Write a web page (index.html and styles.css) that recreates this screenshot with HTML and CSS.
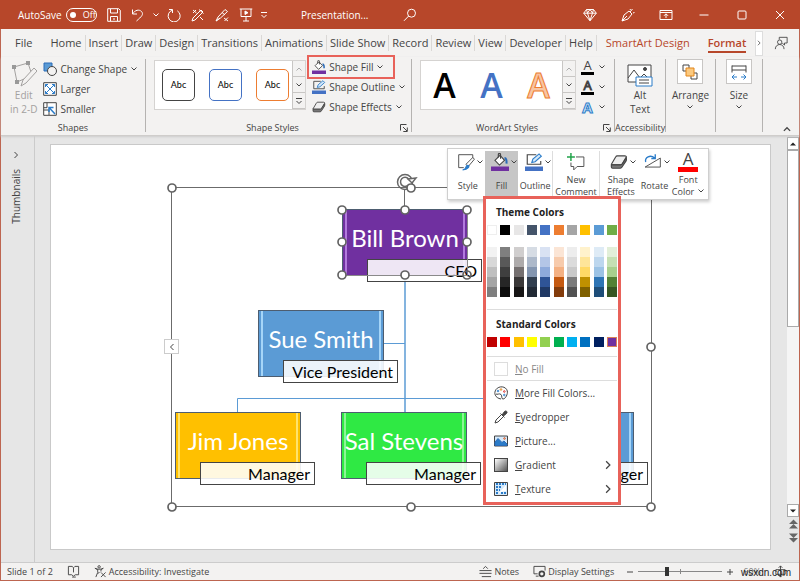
FILE: index.html
```html
<!DOCTYPE html>
<html lang="en">
<head>
<meta charset="utf-8">
<title>Presentation</title>
<link rel="stylesheet" href="styles.css">
</head>
<body>
<svg class="defs" aria-hidden="true">
  <symbol id="chev" viewBox="0 0 8 8"><path d="M1.5 2.5 4 5l2.500-2.500"/></symbol>
  <symbol id="chev-up" viewBox="0 0 8 8"><path d="M1.500 5.500 4 3l2.500 2.500"/></symbol>
  <symbol id="chev-right" viewBox="0 0 8 8"><path d="M2.500 1 5.500 4l-3 3"/></symbol>
  <symbol id="chev-left" viewBox="0 0 8 8"><path d="M5.500 1 2.500 4l3 3"/></symbol>
  <symbol id="chev-bar" viewBox="0 0 8 8"><path d="M1 1.500h6M1.500 4 4 6.500 6.500 4"/></symbol>
  <symbol id="launch" viewBox="0 0 8 8"><path d="M.5 6.500v-6h6M3 3l4 4M7.300 3.500v4h-4"/></symbol>
  <symbol id="bucket" viewBox="0 0 16 16">
    <path d="M3.500 6.500 8 2l4 4.500-4.500 4.200z" fill="#fff"/><path d="M6.500 4V1.500c0-1.500 2-1.500 2 0V5"/>
    <path d="M12 4.500c1.500 0 2 2 1.800 5" stroke="#2b6cb8" stroke-width="1.800"/>
    <path d="M0 12h16v4H0z" fill="#7030a0" stroke="none"/>
  </symbol>
  <symbol id="outline" viewBox="0 0 16 16">
    <path d="M10 1.500H2V10h12V7"/><path d="m6 8.500 1-3L12.500.8l2 2L9 7.800z" fill="#d5e9fa" stroke="#2b7cc9"/>
    <path d="M0 12h16v4H0z" fill="#4472c4" stroke="none"/>
  </symbol>
  <symbol id="effects" viewBox="0 0 16 16">
    <path d="M1.500 9.500 5 3.500q.5-1 1.500-1H13q2 0 1.200 1.500L11 9.500q-.5 1-1.500 1H2q-1 0-.5-1z" fill="#eee"/>
    <path d="M1.200 10v2.500q0 1 1 1h7q1 0 1.500-1l3.600-5.500q.5-1 .2-3L11 9.500q-.5 1-1.500 1H2q-.8 0-.8-.5z" fill="#777"/>
  </symbol>
  <symbol id="dropper" viewBox="0 0 14 14">
    <path d="m1 13 1-3 5.500-5.500 2 2L4 12zM6.500 3.500l4 4" /><path d="m8 5 2.500-3.500c1.500-1.500 3.500.5 2 2L9.500 6z" fill="currentColor"/>
  </symbol>
</svg>

<div class="window">
  <header class="titlebar">
    <label class="autosave">AutoSave <input type="checkbox" class="switch-input"><span class="switch"><i></i>Off</span></label>
    <nav class="quick" aria-label="Quick access">
      <button aria-label="Save"><svg viewBox="0 0 14 14"><path d="M.7.7h11l1.600 1.600v11H.7zM3.500 1v4h7V1M3.500 13V8.500h7V13M6 11h2"/></svg></button>
      <button aria-label="Undo"><svg viewBox="0 0 14 14"><path d="M1.500 1.500v4.500H6M1.500 6C4 2 8 1 10.500 3.500c2.500 3 0 5-5 9.500"/></svg></button>
      <button aria-label="Undo history" class="tiny"><svg><use href="#chev"/></svg></button>
      <button aria-label="Redo"><svg viewBox="0 0 14 14"><path d="M2 1.500h3.500V5M5.300 2.200a6 6 0 1 0 5 .6"/></svg></button>
      <button aria-label="Pick colour"><svg viewBox="0 0 14 14"><path d="m1 13 1-3 8-8 2 2-8 8zM8 1.500l4.500 4M2 2l3.500 3M2 5l3-3M9 9l3 3"/></svg></button>
      <button aria-label="Apply colour"><svg viewBox="0 0 14 14"><path d="m1 13 2-4 7-7.500 2.500 2L5.500 10zM1 13l4-3M7 4.500 10 7M9 10l4 3M13 9.500 9.500 13"/></svg></button>
      <button aria-label="Start slide show"><svg viewBox="0 0 14 14"><path d="M.7 1h12.600M2 1v7.500h10V1M7 8.500V13M4 13h6"/><path d="m6 3 3 1.700L6 6.500z" fill="currentColor"/></svg></button>
      <button aria-label="Customize toolbar" class="tiny"><svg><use href="#chev-bar"/></svg></button>
    </nav>
    <span class="doc">Presentation...</span>
    <button class="search" aria-label="Search"><svg viewBox="0 0 14 14"><circle cx="8.500" cy="5.200" r="4"/><path d="M5.700 8 1 12.800"/></svg></button>
    <nav class="winbtns" aria-label="Window">
      <button aria-label="Premium"><svg viewBox="0 0 14 14"><path d="M3.500 1.500h7l2.800 3.700L7 12.800.7 5.200zM.7 5.200h12.600M3.500 1.500l1 3.700L7 12.500l2.500-7.300 1-3.700M4.500 5 7 1.500 9.500 5"/></svg></button>
      <button aria-label="Draw"><svg viewBox="0 0 14 14"><path d="m1 13 2-6 5-4 3 3-4 5zM1 13l5-5M9 4l2.500-3M12 5l1.500-.5M9 1l.5 1"/></svg></button>
      <button aria-label="Ribbon display"><svg viewBox="0 0 14 14"><path d="M1 2.500h12v9H1zM1 4.500h12M7 10V6M5 7.800l2-2 2 2"/></svg></button>
      <button aria-label="Minimize"><svg viewBox="0 0 14 14"><path d="M2.500 7h9"/></svg></button>
      <button aria-label="Maximize"><svg viewBox="0 0 14 14"><rect x="3" y="3" width="8" height="8" rx="1"/></svg></button>
      <button aria-label="Close"><svg viewBox="0 0 14 14"><path d="m3 3 8 8M11 3l-8 8"/></svg></button>
    </nav>
  </header>

  <nav class="tabs" aria-label="Ribbon tabs">
    <a href="#" class="file">File</a><a href="#">Home</a><a href="#">Insert</a><a href="#">Draw</a><a href="#">Design</a><a href="#">Transitions</a><a href="#">Animations</a><a href="#">Slide Show</a><a href="#">Record</a><a href="#">Review</a><a href="#">View</a><a href="#">Developer</a><a href="#">Help</a><a href="#" class="ctx">SmartArt Design</a><a href="#" class="ctx active"><span>Format</span></a>
    <button class="more" aria-label="More tabs"><svg><use href="#chev-right"/></svg></button>
    <button class="share" aria-label="Comments"><svg viewBox="0 0 16 16"><path d="M6 4V1.500h9V8h-3v2.500L9.500 8"/><circle cx="6.500" cy="7" r="2.500"/><path d="M1.500 15c0-7 10-7 10 0"/></svg></button>
  </nav>

  <section class="ribbon">
    <div class="group g-shapes">
      <div class="tools">
        <button class="big dim"><svg viewBox="0 0 26 26"><path d="M3 6 17 2l3 9M3 6l3 15 7-3"/><path d="m10 25 2-6L23 7l3 3-11 12z" fill="#f3f2f1"/><path d="M1 4h4v4H1zM15 0h4v4h-4zM4 19h4v4H4z" fill="#999" stroke="none"/></svg>Edit<br>in 2-D</button>
        <div class="list">
          <button><svg viewBox="0 0 14 14"><path d="M1 1h8v8H1z" fill="#5b9bd5" stroke="#2b6cb8"/><circle cx="9" cy="9" r="4.500" fill="#f3f2f1"/></svg>Change Shape<svg class="c"><use href="#chev"/></svg></button>
          <button><svg viewBox="0 0 14 14"><path d="M.7.700h12.600v12.600H.7z" fill="#fff"/><path d="m2.500 2.500 9 9M11.500 2.500l-9 9M2.500 5V2.500H5M9 2.500h2.500V5M2.500 9v2.500H5M9 11.500h2.500V9" stroke="#2b7cc9"/></svg>Larger</button>
          <button><svg viewBox="0 0 14 14"><path d="M.7.700h12.600v12.600H.7z" fill="#fff"/><path d="M.7 8H6v5M4 .7v5H.7"/><path d="M12 12 6.500 6M6 10V5.500h4.500" stroke="#2b7cc9" stroke-width="1.500"/></svg>Smaller</button>
        </div>
      </div>
      <h2>Shapes</h2>
    </div>
    <div class="group g-styles">
      <div class="tools">
        <div class="gallery">
          <button class="abc k">Abc</button><button class="abc b">Abc</button><button class="abc o">Abc</button>
          <div class="spin"><button class="off" aria-label="Up"><svg><use href="#chev-up"/></svg></button><button aria-label="Down"><svg><use href="#chev"/></svg></button><button aria-label="More styles"><svg><use href="#chev-bar"/></svg></button></div>
        </div>
        <div class="list">
          <button class="marked"><svg><use href="#bucket"/></svg>Shape Fill<svg class="c"><use href="#chev"/></svg></button>
          <button><svg><use href="#outline"/></svg>Shape Outline<svg class="c"><use href="#chev"/></svg></button>
          <button><svg><use href="#effects"/></svg>Shape Effects<svg class="c"><use href="#chev"/></svg></button>
        </div>
      </div>
      <h2>Shape Styles</h2><button class="launch" aria-label="Shape styles options"><svg><use href="#launch"/></svg></button>
    </div>
    <div class="group g-word">
      <div class="tools">
        <div class="gallery">
          <button class="wa k">A</button><button class="wa b">A</button><button class="wa o">A</button>
          <div class="spin"><button class="off" aria-label="Up"><svg><use href="#chev-up"/></svg></button><button aria-label="Down"><svg><use href="#chev"/></svg></button><button aria-label="More styles"><svg><use href="#chev-bar"/></svg></button></div>
        </div>
        <div class="list text-tools">
          <button aria-label="Text fill"><span class="ta">A</span><svg class="c"><use href="#chev"/></svg></button>
          <button aria-label="Text outline"><span class="ta hollow">A</span><svg class="c"><use href="#chev"/></svg></button>
          <button aria-label="Text effects"><span class="ta glow">A</span><svg class="c"><use href="#chev"/></svg></button>
        </div>
      </div>
      <h2>WordArt Styles</h2><button class="launch" aria-label="WordArt options"><svg><use href="#launch"/></svg></button>
    </div>
    <div class="group g-acc">
      <div class="tools"><button class="big"><svg viewBox="0 0 26 26"><path d="M1 4h23v17H1z" fill="#fff"/><path d="m1 17 6-8 6 8 4-4 6 6"/><circle cx="18" cy="8" r="1.500" fill="#444"/><path d="M9 16h16v9H9z" fill="#fff" stroke="#2b7cc9"/><path d="M12 19h10M12 22h10"/></svg>Alt<br>Text</button></div>
      <h2>Accessibility</h2>
    </div>
    <div class="group g-arr">
      <div class="tools"><button class="big boxed"><span><svg viewBox="0 0 16 16"><path d="M1 1h6v6H1zM9 9h6v6H9z" fill="#fff"/><path d="M4 4h8v8H4z" fill="#fbc97f" stroke="#e3861b"/></svg></span>Arrange<svg class="c"><use href="#chev"/></svg></button></div>
    </div>
    <div class="group g-size">
      <div class="tools"><button class="big boxed"><span><svg viewBox="0 0 16 16"><path d="M1 1.500v7M15 1.500v7M1 2h14M1 6h14"/><path d="M1 13h5M10 13h5M3.500 10.500 1 13l2.500 2.500M12.500 10.500 15 13l-2.500 2.500" stroke="#2b7cc9"/></svg></span>Size<svg class="c"><use href="#chev"/></svg></button></div>
    </div>
    <button class="collapse" aria-label="Collapse ribbon"><svg><use href="#chev-up"/></svg></button>
  </section>

  <main class="work">
    <aside class="thumbs"><svg><use href="#chev-right"/></svg><span>Thumbnails</span></aside>
    <div class="stage">
      <div class="slide">
        <svg class="wires" viewBox="0 0 720 405">
          <g fill="none" stroke="#5b9bd5"><path d="M187.500 268v-13.500h334V268M334 199.500h21"/><path d="M355 131v137" stroke-width="1.500"/></g>
        </svg>
        <div class="node ceo"><b>Bill Brown</b><span>CEO</span></div>
        <div class="node vp"><b>Sue Smith</b><span>Vice President</span></div>
        <div class="node m1"><b>Jim Jones</b><span>Manager</span></div>
        <div class="node m2"><b>Sal Stevens</b><span>Manager</span></div>
        <div class="node m3"><b></b><span>Manager</span></div>
        <svg class="wires" viewBox="0 0 720 405">
          <g fill="none" stroke="#6b6b6b"><path d="M121.500 43.500h480v319h-480zM354.500 45v21"/><path d="M292.500 131.500h125v-65" stroke="#8a8a8a"/></g>
          <g fill="none" stroke="#666" stroke-width="1.500"><circle cx="355" cy="38" r="7.500"/><path d="M359 40a4.500 4.500 0 1 1-.5-5" /><path d="m358 35 8-1-4 5z" fill="#fff"/></g>
          <g fill="#fff" stroke="#636363" stroke-width="1.700"><circle cx="122" cy="44" r="4"/><circle cx="361" cy="44" r="4"/><circle cx="601" cy="203" r="4"/><circle cx="122" cy="363" r="4"/><circle cx="361" cy="363" r="4"/><circle cx="601" cy="363" r="4"/>
          <circle cx="292" cy="66" r="4"/><circle cx="355" cy="66" r="4"/><circle cx="417" cy="66" r="4"/><circle cx="292" cy="98" r="4"/><circle cx="417" cy="98" r="4"/><circle cx="292" cy="131" r="4"/><circle cx="355" cy="131" r="4"/><circle cx="417" cy="131" r="4" fill="none"/></g>
        </svg>
        <button class="pane" aria-label="Open text pane"><svg><use href="#chev-left"/></svg></button>

        <div class="mini">
          <button><span><svg viewBox="0 0 16 16"><path d="M14 6V1.500H1.500V13H6" stroke-width=".8"/><path d="m8 10 6-6 1.500 1.500L10 12z" fill="#fff" stroke-width=".8"/><path d="M5 15c4 0 2-4 4.500-4S10 15 5 15z" fill="#2b7cc9" stroke="#2b7cc9"/></svg><svg class="c"><use href="#chev"/></svg></span><em>Style</em></button>
          <button class="on"><span><svg><use href="#bucket"/></svg><svg class="c"><use href="#chev"/></svg></span><em>Fill</em></button>
          <button><span><svg><use href="#outline"/></svg><svg class="c"><use href="#chev"/></svg></span><em>Outline</em></button>
          <button class="wide"><span><svg viewBox="0 0 16 16"><path d="M8 3.500h7V12H9l-3 3v-3H3.500V8.500" stroke-width=".8"/><path d="M3.500 0v7M0 3.500h7" stroke="#21a34a" stroke-width="1.300"/></svg></span><em>New<br>Comment</em></button>
          <button><span><svg><use href="#effects"/></svg><svg class="c"><use href="#chev"/></svg></span><em>Shape<br>Effects</em></button>
          <button><span><svg viewBox="0 0 16 16"><path d="M1 12.500h13.500V4.500z" stroke-width=".8"/><path d="M1.500 8c-1-4 4-7 8-3.500M6.500 5H10V1" stroke="#2b7cc9" stroke-width="1.200"/></svg><svg class="c"><use href="#chev"/></svg></span><em>Rotate</em></button>
          <button class="font"><span><i>A</i></span><em>Font<br>Color <svg class="c"><use href="#chev"/></svg></em></button>
        </div>

        <div class="menu">
          <h3>Theme Colors</h3>
          <div class="swatches">
            <i class="white"></i><i style="background:#000"></i><i style="background:#e7e6e6"></i><i style="background:#44546a"></i><i style="background:#4472c4"></i><i style="background:#ed7d31"></i><i style="background:#a5a5a5"></i><i style="background:#ffc000"></i><i style="background:#5b9bd5"></i><i style="background:#70ad47"></i>
          </div>
          <div class="swatches tints">
            <i style="background:#f2f2f2"></i><i style="background:#7f7f7f"></i><i style="background:#d0cece"></i><i style="background:#d6dce4"></i><i style="background:#d9e2f3"></i><i style="background:#fbe5d5"></i><i style="background:#ededed"></i><i style="background:#fff2cc"></i><i style="background:#deebf6"></i><i style="background:#e2efd9"></i>
            <i style="background:#d8d8d8"></i><i style="background:#595959"></i><i style="background:#aeabab"></i><i style="background:#adb9ca"></i><i style="background:#b4c6e7"></i><i style="background:#f7cbac"></i><i style="background:#dbdbdb"></i><i style="background:#fee599"></i><i style="background:#bdd7ee"></i><i style="background:#c5e0b3"></i>
            <i style="background:#bfbfbf"></i><i style="background:#3f3f3f"></i><i style="background:#757070"></i><i style="background:#8496b0"></i><i style="background:#8eaadb"></i><i style="background:#f4b183"></i><i style="background:#c9c9c9"></i><i style="background:#ffd965"></i><i style="background:#9cc3e5"></i><i style="background:#a8d08d"></i>
            <i style="background:#a5a5a5"></i><i style="background:#262626"></i><i style="background:#3a3838"></i><i style="background:#323f4f"></i><i style="background:#2f5496"></i><i style="background:#c55a11"></i><i style="background:#7b7b7b"></i><i style="background:#bf9000"></i><i style="background:#2e75b5"></i><i style="background:#538135"></i>
            <i style="background:#7f7f7f"></i><i style="background:#0c0c0c"></i><i style="background:#171616"></i><i style="background:#222a35"></i><i style="background:#1f3864"></i><i style="background:#833c0b"></i><i style="background:#525252"></i><i style="background:#7f6000"></i><i style="background:#1e4e79"></i><i style="background:#375623"></i>
          </div>
          <h3 class="std">Standard Colors</h3>
          <div class="swatches last">
            <i style="background:#c00000"></i><i style="background:#f00"></i><i style="background:#ffc000"></i><i style="background:#ff0"></i><i style="background:#92d050"></i><i style="background:#00b050"></i><i style="background:#00b0f0"></i><i style="background:#0070c0"></i><i style="background:#002060"></i><i class="picked"></i>
          </div>
          <button class="nofill"><i class="empty"></i><span><u>N</u>o Fill</span></button>
          <button><svg viewBox="0 0 14 14"><path d="M7 13C1 12-.5 7 2 3.500 5-.5 12 0 13.300 5c.7 3-1.800 8-4.300 8-2 0-.5-3-2-4.500S3 9 2 8"/><circle cx="4" cy="5" r=".8" stroke="#2b7cc9"/><circle cx="7" cy="3.500" r=".8" stroke="#e3861b"/><circle cx="10.300" cy="5.500" r=".8" stroke="#d33"/><circle cx="10.300" cy="9" r=".8" stroke="#2b7cc9"/></svg><span><u>M</u>ore Fill Colors...</span></button>
          <button><svg><use href="#dropper"/></svg><span><u>E</u>yedropper</span></button>
          <button><svg viewBox="0 0 14 14"><path d="M.5 2h13v10H.5z" fill="#d5e9fa"/><path d="M1 11.500V8l3-3.500 4 4L10 7l3 3v1.500z" fill="#2b7cc9" stroke="#2b6cb8"/><circle cx="10.500" cy="4.500" r=".8" stroke="#e3561b"/></svg><span><u>P</u>icture...</span></button>
          <button><i class="grad"></i><span><u>G</u>radient</span><svg class="c"><use href="#chev-right"/></svg></button>
          <button><svg viewBox="0 0 14 14"><path d="M.5.5h13v13H.5z" fill="#d5e9fa"/><path d="M2 2h10M2 5h6M2 8h4M2 11h2M7 11h5" stroke="#2b7cc9" stroke-width="2" stroke-dasharray="2 1"/><path d="m4 12 8-9v6l-5 1z" fill="#fff" stroke="none"/></svg><span><u>T</u>exture</span><svg class="c"><use href="#chev-right"/></svg></button>
        </div>
      </div>
    </div>
    <div class="scroll">
      <button aria-label="Scroll up"><svg viewBox="0 0 8 8"><path d="m0 6 4-4 4 4z"/></svg></button>
      <div class="track"><div class="thumb"></div></div>
      <button aria-label="Scroll down"><svg viewBox="0 0 8 8"><path d="m0 2 4 4 4-4z"/></svg></button>
      <button class="page" aria-label="Previous slide"><svg viewBox="0 0 10 12"><path d="m0 6 5-5 5 5zM0 11l5-5 5 5z"/></svg></button>
      <button class="page" aria-label="Next slide"><svg viewBox="0 0 10 12"><path d="m0 1 5 5 5-5zM0 6l5 5 5-5z"/></svg></button>
    </div>
  </main>

  <footer class="status">
    <span>Slide 1 of 2</span>
    <button aria-label="Spelling"><svg viewBox="0 0 14 14"><path d="M7 3 5.500 1.500H1.500v9H5L7 12l2-1.500h3.500v-9h-4zM7 3v5M5.500 13h4"/></svg></button>
    <button class="acc"><svg viewBox="0 0 14 14"><circle cx="5.500" cy="2" r="1.300"/><path d="M1 3.500 4 5v3l-2 5M1 3.500c3 1.500 6 1.500 9 0L7.500 5v2M4 9l2-1M7.500 8l5 5M12.500 8l-5 5"/></svg>Accessibility: Investigate</button>
    <button class="notes"><svg viewBox="0 0 14 14"><path d="M4.500 4 7 1.500 9.500 4M.5 6h13M.5 9h13M3 12.500h10"/></svg>Notes</button>
    <button><svg viewBox="0 0 14 14"><path d="M5 9.500H1v-8h12V6M3 12h3"/><circle cx="9.500" cy="9.500" r="2.700" stroke-width="1.800"/></svg>Display Settings</button>
    <div class="zoom">
      <button aria-label="Zoom out"><svg viewBox="0 0 8 8"><path d="M1 4h6"/></svg></button>
      <input type="range" min="0" max="100" value="34" aria-label="Zoom">
      <button aria-label="Zoom in"><svg viewBox="0 0 8 8"><path d="M1 4h6M4 1v6"/></svg></button>
      <button class="pct">60%</button>
      <button aria-label="Fit slide"><svg viewBox="0 0 14 14"><path d="M2 5h10v5H2zM7 1v12M5 3l2-2 2 2M5 11l2 2 2-2"/></svg></button>
      <span class="mark">wsxdn.com</span>
    </div>
  </footer>
</div>
</body>
</html>
```
FILE: styles.css
```css
* { box-sizing: border-box; }
html, body { height: 100%; margin: 0; }
body { font: 10px/14px "Open Sans", "Noto Sans", sans-serif; color: #444; overflow: hidden; }
button { font: inherit; color: inherit; background: none; border: 0; padding: 0; margin: 0; white-space: nowrap; }
a { color: inherit; text-decoration: none; }
i, em { font-style: normal; }
svg { display: block; flex: none; width: 14px; height: 14px; fill: none; stroke: currentColor; }
svg.defs { position: absolute; width: 0; height: 0; }
svg.c { width: 8px; height: 8px; }
h2, h3 { margin: 0; font-size: inherit; }

.window { height: 100%; display: grid; grid-template-columns: minmax(0, 1fr); grid-template-rows: 29px 28px 79px 1fr 18px; border: solid #bd6550; border-width: 0 1px 1px; background: #f3f2f1; }

.titlebar { display: flex; align-items: center; background: #b7472a; color: #fff; margin: 0 -1px; padding: 0 6px 0 18px; }
.autosave { display: flex; align-items: center; gap: 4px; width: 89px; white-space: nowrap; }
.switch-input { position: absolute; opacity: 0; }
.switch { display: flex; align-items: center; gap: 7px; width: 31px; height: 14px; border: 1px solid #fff; border-radius: 7px; padding-left: 3px; font-size: 9px; }
.switch i { width: 6px; height: 6px; border-radius: 50%; background: #fff; }
.quick { display: flex; align-items: center; gap: 10px; }
.quick .tiny { margin: 0 -3px; }
.quick .tiny svg { width: 8px; height: 8px; }
.doc { margin-left: 36px; width: 102px; }
.winbtns { display: flex; gap: 24px; margin-left: auto; padding-right: 7px; }

.tabs { display: flex; align-items: center; font-size: 11px; line-height: 16px; padding-left: 10px; }
.tabs a { padding: 0 3px; border-right: 1px solid #dad8d6; white-space: nowrap; }
.tabs .file { padding: 0 15px 0 4px; }
.tabs a.file, .tabs a.ctx { border: 0; }
.tabs .ctx { color: #b7472a; padding: 0 9px; }
.tabs .active span { display: block; font-weight: 600; border-bottom: 2px solid #b7472a; margin-bottom: -2px; }
.more { width: 10px; height: 25px; background: #fff; border: 1px solid #ddd; margin-left: auto; display: grid; place-items: center; }
.more svg { width: 6px; height: 6px; }
.share { margin: 0 11px; }

.ribbon { display: flex; padding-top: 2px; border-bottom: 1px solid #cfcdcb; box-shadow: 0 1px 2px #ccc; position: relative; z-index: 1; }
.group { position: relative; flex: none; height: 73px; border-right: 1px solid #b5b3b1; display: flex; flex-direction: column; }
.group h2 { font-size: 9px; line-height: 12px; font-weight: 400; text-align: center; margin-top: auto; margin-bottom: -2px; white-space: nowrap; }
.g-shapes { width: 145px; }
.g-styles { width: 266px; }
.g-word { width: 203px; }
.g-acc { width: 51px; }
.g-arr { width: 50px; }
.g-size { width: 47px; }
.group.g-styles h2, .group.g-word h2 { padding-right: 12px; }
.tools { display: flex; align-items: flex-start; }
.g-shapes .tools { padding-left: 9px; gap: 6px; }
.list { display: flex; flex-direction: column; align-items: flex-start; font-size: 10px; }
.list button { display: flex; align-items: center; gap: 3px; height: 20px; }
.big { display: flex; flex-direction: column; align-items: center; margin: 0 auto; }
.big svg { width: 26px; height: 26px; margin: 2px 0 1px; }
.g-shapes .big { margin: 0; }
.dim { color: #a3a1a0; }
.boxed span { width: 26px; height: 25px; background: #fff; border: 1px solid #c8c6c4; display: grid; place-items: center; margin-bottom: 4px; }
.boxed span svg { width: 16px; height: 16px; margin: 0; }
.boxed svg.c, .big svg.c { width: 8px; height: 8px; margin: 1px 0; }
.gallery { display: flex; align-items: center; background: #fff; border: 1px solid #d5d3d1; height: 50px; width: 153px; margin: 1px 0 0 8px; padding-left: 7px; }
.gallery > button { flex: none; width: 33px; }
.gallery > button + button { margin-left: 14px; }
.abc { height: 32px; border: 1px solid #444; border-radius: 5px; font: 9px/12px Lato, sans-serif; color: #000; }
.abc.b { border-color: #4472c4; }
.abc.o { border-color: #ed7d31; }
.spin { margin-left: auto; align-self: stretch; display: grid; width: 13px; border-left: 1px solid #c8c6c4; flex: none; }
.spin button { display: grid; place-items: center; background: #f3f2f1; border-bottom: 1px solid #c8c6c4; }
.spin button svg { width: 8px; height: 8px; }
.spin .off { color: #aaa; }
.g-styles .list { padding-left: 1px; }
.g-styles .list button { padding: 0 5px; border: 0 solid #e8625a; }
.g-styles .list .marked { height: 24px; border-width: 2px; padding: 0 9px 0 3px; margin: -4px 0 -2px; }
.launch { position: absolute; right: 3px; bottom: 0; }
.launch svg { width: 8px; height: 8px; }
.wa { font: 600 34px/44px "Open Sans", sans-serif; }
.wa.k { color: #000; }
.wa.b { color: #4472c4; }
.wa.o { color: #f8c5a2; -webkit-text-stroke: 1px #ed7d31; }
.g-word .gallery { width: 156px; }
.text-tools { padding-left: 5px; margin-top: -2px; }
.text-tools button { gap: 4px; }
.ta { width: 13px; height: 15px; border-bottom: 3px solid #000; font-size: 13px; line-height: 11px; text-align: center; }
.ta.hollow { color: #fff; -webkit-text-stroke: 1px #444; }
.ta.glow { border: 0; font-weight: 700; font-size: 15px; line-height: 15px; color: #d5e9fa; -webkit-text-stroke: 1px #2b7cc9; }
.collapse { margin: auto 7px 1px auto; }
.collapse svg { width: 10px; height: 10px; }

.work { display: grid; grid-template-columns: 34px minmax(0, 1fr) 12px; background: #e6e6e6; min-height: 0; }
.thumbs { border-right: 1px solid #cbcbcb; display: flex; flex-direction: column; align-items: center; gap: 10px; padding-top: 15px; padding-right: 3px; }
.thumbs svg { width: 8px; height: 8px; }
.thumbs span { writing-mode: vertical-rl; transform: rotate(180deg); }
.stage { padding: 8px 16px 12px 15px; }
.slide { position: relative; height: 100%; background: #fff; outline: 1px solid #c9c9c9; outline-offset: -1px; }
.wires { position: absolute; left: 0; top: 0; width: 720px; height: 405px; }
.node { position: absolute; width: 126px; height: 67px; border: 1px solid #4d5d70; background: var(--c); box-shadow: inset 2px 0 0 var(--c), inset -2px 0 0 var(--c), inset 4px 0 0 var(--l), inset -4px 0 0 var(--l); }
.node b { display: block; font: 400 24px/56px Lato, "Open Sans", sans-serif; color: #fff; text-align: center; white-space: nowrap; margin: 0 -4px; }
.node span { position: absolute; left: 24px; top: 49px; width: 115px; height: 23px; background: #ffffffe0; border: 1px solid #444; color: #000; font: 16px/21px Lato, "Open Sans", sans-serif; text-align: right; padding-right: 4px; white-space: nowrap; }
.ceo { left: 292px; top: 65px; --c: #7030a0; --l: #b279dd; }
.vp { left: 208px; top: 166px; --c: #5b9bd5; --l: #a5d5f8; }
.m1 { left: 125px; top: 268px; --c: #ffc000; --l: #ffe36b; }
.m2 { left: 291px; top: 268px; --c: #2fe944; --l: #8cf597; }
.m3 { left: 458px; top: 268px; --c: #5b9bd5; --l: #a5d5f8; }
.pane { position: absolute; left: 114px; top: 195px; width: 15px; height: 15px; background: #fff; border: 1px solid #ccc; display: grid; place-items: center; }
.pane svg { width: 8px; height: 8px; }

.mini { position: absolute; left: 397px; top: 4px; width: 262px; height: 52px; display: flex; background: #fff; border: 1px solid #cfcfcf; box-shadow: 1px 2px 3px #0003; padding: 2px 3px 0 3px; font-size: 9px; line-height: 12px; }
.mini button { flex: 1 1 33px; min-width: 0; display: grid; grid-template-rows: 22px 1fr; justify-items: center; align-items: center; }
.mini button > span { display: flex; align-items: center; height: 22px; }
.mini span svg { width: 18px; height: 18px; }
.mini span svg.c { width: 8px; height: 8px; margin-right: -6px; margin-left: 1px; }
.mini .on { background: #c6c6c6; }
.mini .wide { flex: 0 0 48px; margin-right: 4px; border: solid #ddd; border-width: 0 1px; }
.mini .font i { width: 20px; height: 20px; border-bottom: 5px solid #f00; font-size: 17px; line-height: 14px; }
.mini em svg { display: inline-block; }

.menu { position: absolute; left: 433px; top: 52px; width: 138px; border: 3px solid #e8625a; background: #fff; padding: 5px 1px 1px; }
.menu h3 { color: #222; padding-left: 9px; line-height: 16px; margin-bottom: 5px; }
.menu .std { border-top: 1px solid #ddd; margin: 12px 0 5px; padding-top: 6px; }
.swatches { display: grid; grid-template-columns: repeat(10, 10px); grid-auto-rows: 10px; justify-content: space-between; }
.swatches .white { border: 1px solid #eee; }
.swatches .picked { background: #7030a0; border: 1px solid #d98158; }
.tints { margin-top: 12px; }
.last { margin-bottom: 9px; }
.menu button { display: flex; align-items: center; width: 100%; height: 24px; gap: 7px; padding: 0 4px 0 7px; }
.menu button > svg.c { margin-left: auto; width: 10px; height: 10px; }
.menu .nofill { border: solid #ddd; border-width: 1px 0; color: #888; height: 25px; }
.menu .empty { width: 14px; height: 14px; border: 1px solid #ddd; }
.menu .grad { width: 14px; height: 14px; border: 1px solid #444; background: linear-gradient(135deg, #fff, #555); }
.menu u { text-underline-offset: 1px; }

.scroll { display: flex; flex-direction: column; align-items: stretch; background: #e6e6e6; padding-top: 1px; }
.scroll button { height: 13px; flex: none; display: grid; place-items: center; background: #fff; border: 1px solid #aaa; color: #222; }
.scroll button svg { width: 6px; height: 6px; fill: currentColor; stroke: none; }
.scroll .page { border: 0; background: none; color: #666; height: 14px; }
.scroll .page svg { width: 9px; height: 12px; }
.scroll .page:last-child { margin-bottom: 17px; }
.track { flex: 1; background: #f5f5f5; }
.thumb { height: 50%; background: #fff; border: 1px solid #aaa; }

.status { display: flex; align-items: center; font-size: 9px; border-top: 1px solid #ccc; padding: 0 12px 0 6px; background: #f3f2f1; white-space: nowrap; }
.status button { display: flex; align-items: center; gap: 2px; }
.status > button { margin-left: 14px; }
.status svg { width: 13px; height: 13px; }
.status .notes { margin-left: auto; }
.zoom { position: relative; display: flex; align-items: center; gap: 4px; margin-left: 12px; }
.zoom button:first-child svg, .zoom input + button svg { width: 8px; height: 8px; }
.zoom input { appearance: none; width: 84px; height: 11px; margin: 0; background: linear-gradient(#888, #888) center / 100% 1px no-repeat, linear-gradient(#888, #888) center / 1px 5px no-repeat; }
.zoom input::-webkit-slider-thumb { appearance: none; width: 4px; height: 9px; background: #333; }
.pct { margin: 0 9px 0 5px; color: #777; }
.mark { position: absolute; right: -4px; top: 1px; font: 10px/14px "Liberation Sans", sans-serif; color: #222; }
```
